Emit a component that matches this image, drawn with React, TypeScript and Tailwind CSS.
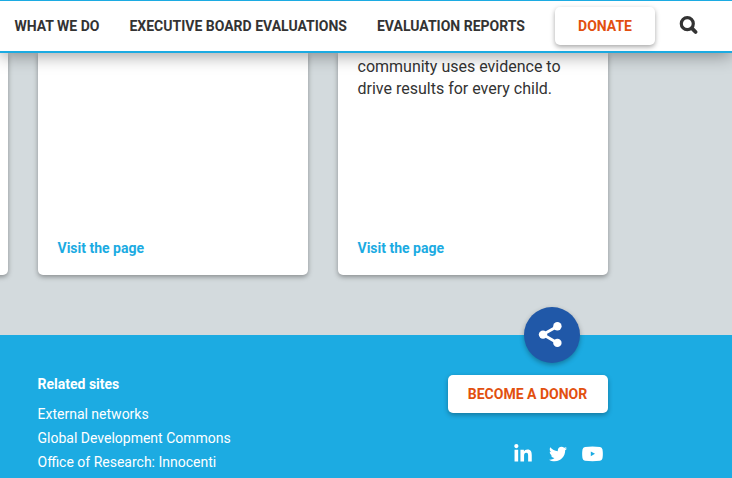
import { FaLinkedinIn, FaTwitter } from "react-icons/fa";

function SearchIcon() {
  return (
    <svg className="block size-5" viewBox="0 0 20 20" fill="none" stroke="#333" strokeLinecap="round">
      <circle cx="8.3" cy="7.7" r="6" strokeWidth="3.2" />
      <path d="M13 12.4L16.6 16" strokeWidth="3.8" />
    </svg>
  );
}

function ShareIcon() {
  return (
    <svg className="block h-[26px] w-6" viewBox="0 0 24 26" fill="#fff" stroke="#fff">
      <path d="M19.5 4.3L5 12.6L19.5 21" fill="none" strokeWidth="2.9" />
      <circle cx="19.4" cy="4.3" r="4.2" stroke="none" />
      <circle cx="5" cy="12.6" r="4.2" stroke="none" />
      <circle cx="19.4" cy="20.9" r="4.2" stroke="none" />
    </svg>
  );
}

function YoutubeIcon() {
  return (
    <svg className="ml-[15px] block h-4 w-[21px]" viewBox="0 0 21 16" fill="#fff">
      <path
        fillRule="evenodd"
        d="M3 1Q10.500 0 18 1Q20 1.200 20.500 3.500Q21.200 8 20.500 12.200Q20 14.500 18 14.700Q10.500 15.600 3 14.700Q1 14.500 .5 12.200Q-.2 8 .5 3.500Q1 1.200 3 1ZM8.800 5.400V10.300L13 7.850Z"
      />
    </svg>
  );
}

function Card({ text, link }: { text?: string; link?: string }) {
  return (
    <article className="flex w-[270px] shrink-0 flex-col justify-between rounded-b-[5px] bg-white pt-[3px] pr-5 pb-[17px] pl-[19.500px] shadow-[0_2px_5px_rgba(0,0,0,0.35)]">
      <p className="text-[16px] leading-[22px] text-[#333]">{text}</p>
      {link && <a className="text-[14px] leading-5 font-bold text-[#1cabe2]">{link}</a>}
    </article>
  );
}

export default function App() {
  return (
    <div className="h-[478px] w-[732px] overflow-hidden bg-[#d3dadd] font-['Roboto','Liberation_Sans',sans-serif]">
      <header className="relative z-10 flex h-[53px] items-center border-t border-b-2 border-[#1cabe2] bg-white pl-[14.500px] text-[14px] font-bold text-[#333] shadow-[0_2px_18px_rgba(0,0,0,0.4)]">
        <nav className="flex w-[540.500px] gap-[30px] whitespace-nowrap">
          <a>WHAT WE DO</a>
          <a>EXECUTIVE BOARD EVALUATIONS</a>
          <a>EVALUATION REPORTS</a>
        </nav>
        <button className="h-[38px] w-[100px] rounded-[5px] bg-white text-[#e2500f] shadow-[0_2px_5px_rgba(0,0,0,0.35)]">DONATE</button>
        <div className="ml-6">
          <SearchIcon />
        </div>
      </header>
      <main className="h-[282px] overflow-hidden">
        <div className="-ml-[262px] flex h-[222px] gap-[30px]">
          <Card />
          <Card link="Visit the page" />
          <Card text="community uses evidence to drive results for every child." link="Visit the page" />
        </div>
      </main>
      <footer className="relative flex h-[143px] justify-between bg-[#1cabe2] pr-[124px] pl-[37.500px] text-white">
        <section className="pt-[39px] text-[14px]">
          <h2 className="leading-5 font-bold">Related sites</h2>
          <ul className="mt-2 leading-6">
            <li>External networks</li>
            <li>Global Development Commons</li>
            <li>Office of Research: Innocenti</li>
          </ul>
        </section>
        <button aria-label="Share" className="absolute -top-7 left-[524px] flex size-14 items-center justify-center rounded-full bg-[#2058a8] pr-[5px] shadow-[0_2px_5px_rgba(0,0,0,0.3)]">
          <ShareIcon />
        </button>
        <section className="flex flex-col pt-10">
          <button className="h-[38px] w-40 rounded-[5px] bg-white pr-[1px] text-[14px] font-bold text-[#e2500f] shadow-[0_2px_5px_rgba(0,0,0,0.3)]">BECOME A DONOR</button>
          <div className="mt-[30px] flex h-[22px] items-center pl-[65px]">
            <FaLinkedinIn className="size-5" />
            <FaTwitter className="ml-4 size-[18px]" />
            <YoutubeIcon />
          </div>
        </section>
      </footer>
    </div>
  );
}
